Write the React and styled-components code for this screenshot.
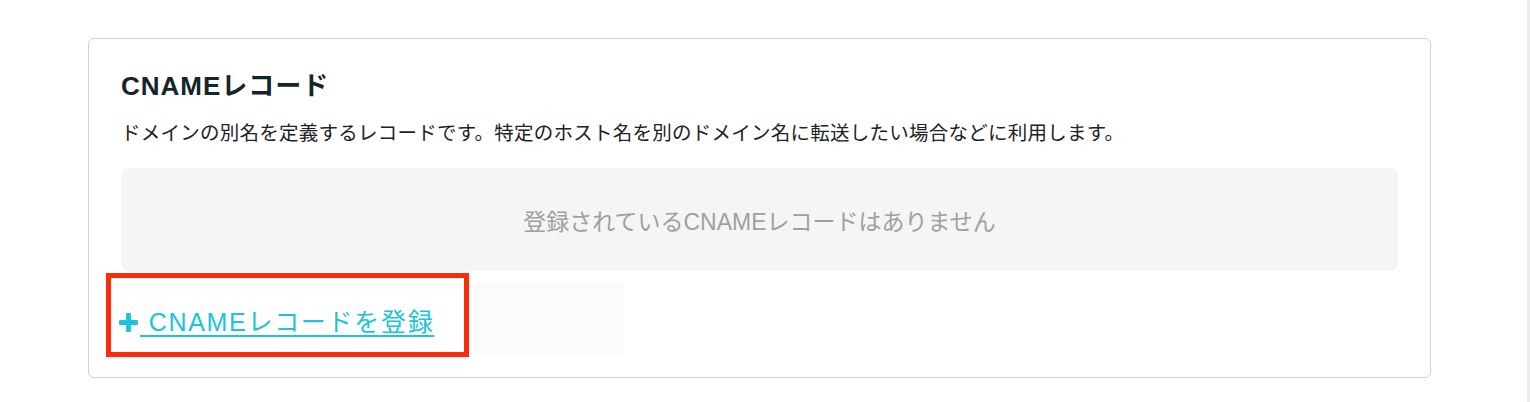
import React from "react";
import styled, { createGlobalStyle } from "styled-components";

const Global = createGlobalStyle`
  html, body { margin: 0; padding: 0; background: #ffffff; }
  body {
    font-family: "Liberation Sans", "Noto Sans CJK JP", sans-serif;
    color: #222222;
  }
`;

const Page = styled.div`
  display: flex;
  width: 1530px;
  min-height: 402px;
`;

const Main = styled.main`
  flex: 1;
  padding: 38px 96px 20px 88px;
`;

const ScrollTrack = styled.div`
  width: 3px;
  background: #ececec;
`;

const Card = styled.section`
  border: 1px solid #d2d2d2;
  border-radius: 6px;
  padding: 29px 32px 20px 32px;
`;

const Title = styled.h2`
  margin: 0;
  font-size: 26px;
  line-height: 36px;
  font-weight: 700;
  letter-spacing: 1px;
  color: #14262a;
`;

const Description = styled.p`
  margin: 14px 0 0;
  font-size: 19.5px;
  line-height: 30px;
  letter-spacing: 0.25px;
  color: #222222;
`;

const EmptyBox = styled.div`
  margin-top: 20px;
  height: 103px;
  border-radius: 8px;
  background: #f5f5f5;
  display: flex;
  align-items: center;
  justify-content: center;
  font-size: 23px;
  color: #a0a0a0;
`;

const ActionRow = styled.div`
  display: flex;
  align-items: flex-start;
  margin: 2px 0 0 -15px;
`;

const Highlight = styled.div`
  border: 5px solid #ff2a08;
  padding: 29px 30px 15px 8px;
`;

const AddLink = styled.a`
  display: inline-flex;
  align-items: center;
  font-size: 25px;
  line-height: 30px;
  letter-spacing: 1.7px;
  color: #1bc3dc;
  text-decoration: none;
  cursor: pointer;
`;

const LinkLabel = styled.span`
  text-decoration: underline;
  text-decoration-thickness: 2px;
  text-underline-offset: 4px;
  white-space: pre;
  margin-left: 2px;
`;

const PlusIcon = styled.svg`
  width: 19px;
  height: 19px;
  flex-shrink: 0;
`;

const GhostBox = styled.div`
  width: 150px;
  height: 73px;
  margin: 9px 0 0 5px;
  background: #fbfbfb;
`;

export default function App() {
  return (
    <>
      <Global />
      <Page>
        <Main>
          <Card>
            <Title>CNAMEレコード</Title>
            <Description>
              ドメインの別名を定義するレコードです。特定のホスト名を別のドメイン名に転送したい場合などに利用します。
            </Description>
            <EmptyBox>登録されているCNAMEレコードはありません</EmptyBox>
            <ActionRow>
              <Highlight>
                <AddLink>
                  <PlusIcon viewBox="0 0 18 18" aria-hidden="true">
                    <path
                      d="M9 1.5v15M1.5 9h15"
                      stroke="#1bc3dc"
                      strokeWidth="4.6"
                      strokeLinecap="round"
                    />
                  </PlusIcon>
                  <LinkLabel> CNAMEレコードを登録</LinkLabel>
                </AddLink>
              </Highlight>
              <GhostBox />
            </ActionRow>
          </Card>
        </Main>
        <ScrollTrack />
      </Page>
    </>
  );
}
